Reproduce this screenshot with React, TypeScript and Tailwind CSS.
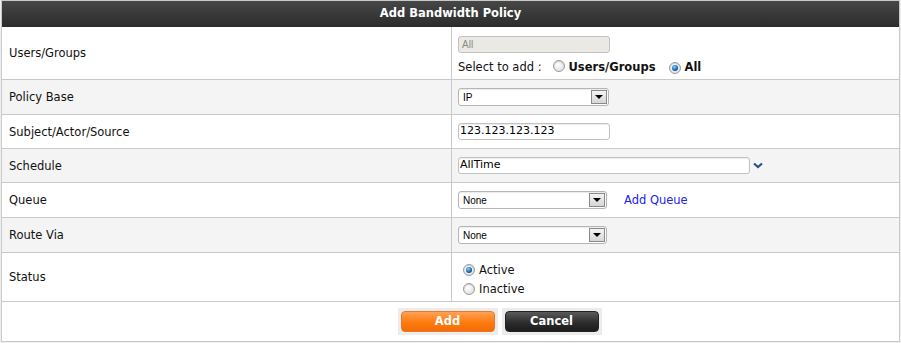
import React from "react";

const FONT = "font-['DejaVu_Sans',Verdana,sans-serif]";

const Radio = ({ checked }: { checked?: boolean }) => (
  <span className="inline-flex h-[12px] w-[12px] shrink-0 items-center justify-center rounded-full border border-[#9a9a9a] bg-[radial-gradient(circle_at_40%_35%,#ffffff,#d9d9d9)] shadow-[inset_0_1px_1px_rgba(0,0,0,0.15)]">
    {checked && <span className="h-[6px] w-[6px] rounded-full bg-[radial-gradient(circle_at_40%_35%,#8fd0ff,#0a5fa8_60%,#053a70)]" />}
  </span>
);

const SelectBox = ({ value, width }: { value: string; width: string }) => (
  <div className={`flex h-[18px] items-center justify-between rounded-[3px] border border-[#b5b5b5] bg-white pl-[4px] pr-[1px] shadow-[inset_0_1px_1px_rgba(0,0,0,0.08)] ${width}`}>
    <span className="text-[10px] text-black font-['Liberation_Sans',Arial,sans-serif]">{value}</span>
    <span className="flex h-[14px] w-[16px] items-center justify-center border border-[#8a8a8a] bg-[linear-gradient(#f4f4f4,#d6d6d6)]">
      <span className="h-0 w-0 border-x-[4px] border-t-[4px] border-x-transparent border-t-black" />
    </span>
  </div>
);

const Row = ({
  label,
  h,
  alt,
  children,
}: {
  label: string;
  h: string;
  alt?: boolean;
  children: React.ReactNode;
}) => (
  <div className={`grid grid-cols-[450px_1fr] border-b border-[#c9c9c9] ${alt ? "bg-[#f4f4f4]" : "bg-white"} ${h}`}>
    <div className="flex items-center border-r border-[#c9c9c9] pl-[7px] pt-[2px] text-[11.5px] text-[#111]">{label}</div>
    <div className="flex items-center pl-[6px]">{children}</div>
  </div>
);

export default function App() {
  return (
    <div className={`min-h-[343px] bg-[#efefef] ${FONT}`}>
      <div className="ml-px w-[899px] border border-[#c9c9c9] bg-white">
        <div className="flex h-[26px] items-center justify-center bg-[linear-gradient(#474747,#2b2b2b)] text-[11.5px] font-bold text-white">
          Add Bandwidth Policy
        </div>

        <Row label="Users/Groups" h="h-[53px]">
          <div className="flex flex-col gap-[7px] pt-[4px]">
            <div className="flex h-[17px] w-[152px] items-center rounded-[3px] border border-[#c2c2c2] bg-[#ebe9e4] pl-[3px] text-[10px] text-[#8a8a8a] font-['Liberation_Sans',Arial,sans-serif]">
              All
            </div>
            <div className="flex items-center text-[11.5px] leading-[14px] text-[#111]">
              <span>Select to add :</span>
              <span className="ml-[11px] mr-[4px]">
                <Radio />
              </span>
              <span className="font-bold">Users/Groups</span>
              <span className="ml-[13px] mr-[4px]">
                <Radio checked />
              </span>
              <span className="font-bold">All</span>
            </div>
          </div>
        </Row>

        <Row label="Policy Base" h="h-[35px]" alt>
          <SelectBox value="IP" width="w-[151px]" />
        </Row>

        <Row label="Subject/Actor/Source" h="h-[34px]">
          <div className="flex h-[17px] w-[152px] items-center rounded-[3px] border border-[#c2c2c2] bg-white pl-[1px] text-[11px] text-black shadow-[inset_0_1px_1px_rgba(0,0,0,0.08)]">
            123.123.123.123
          </div>
        </Row>

        <Row label="Schedule" h="h-[34px]" alt>
          <div className="flex items-center">
            <div className="flex h-[17px] w-[292px] items-center rounded-[3px] border border-[#c2c2c2] bg-white pl-[1px] text-[11px] text-black shadow-[inset_0_1px_1px_rgba(0,0,0,0.08)]">
              AllTime
            </div>
            <svg width="10" height="7" viewBox="0 0 10 7" className="ml-[3px]">
              <path d="M1 1.5 L5 5 L9 1.5" fill="none" stroke="#2b4f8c" strokeWidth="2.2" />
            </svg>
          </div>
        </Row>

        <Row label="Queue" h="h-[35px]">
          <div className="flex items-center">
            <SelectBox value="None" width="w-[149px]" />
            <span className="ml-[17px] pt-[2px] text-[11.5px] text-[#2323e6]">Add Queue</span>
          </div>
        </Row>

        <Row label="Route Via" h="h-[35px]" alt>
          <SelectBox value="None" width="w-[149px]" />
        </Row>

        <Row label="Status" h="h-[49px]">
          <div className="flex flex-col gap-[5px] pl-[5px] pt-[4px] text-[11.5px] leading-[14px] text-[#111]">
            <div className="flex items-center gap-[4px]">
              <Radio checked />
              <span>Active</span>
            </div>
            <div className="flex items-center gap-[4px]">
              <Radio />
              <span>Inactive</span>
            </div>
          </div>
        </Row>

        <div className="flex h-[39px] items-center justify-center gap-[4px] pl-[98px]">
          <div className="bg-[#ececec] p-[3px]">
            <button className="flex h-[21px] w-[94px] items-center justify-center rounded-[4px] border border-[#e8782a] bg-[linear-gradient(#ffa254,#ff7a10_55%,#f26d05)] text-[11.5px] font-bold text-white">
              Add
            </button>
          </div>
          <div className="bg-[#ececec] p-[3px]">
            <button className="flex h-[21px] w-[94px] items-center justify-center rounded-[4px] border border-[#222] bg-[linear-gradient(#5a5a5a,#2d2d2d_55%,#1c1c1c)] text-[11.5px] font-bold text-white">
              Cancel
            </button>
          </div>
        </div>
      </div>
    </div>
  );
}
